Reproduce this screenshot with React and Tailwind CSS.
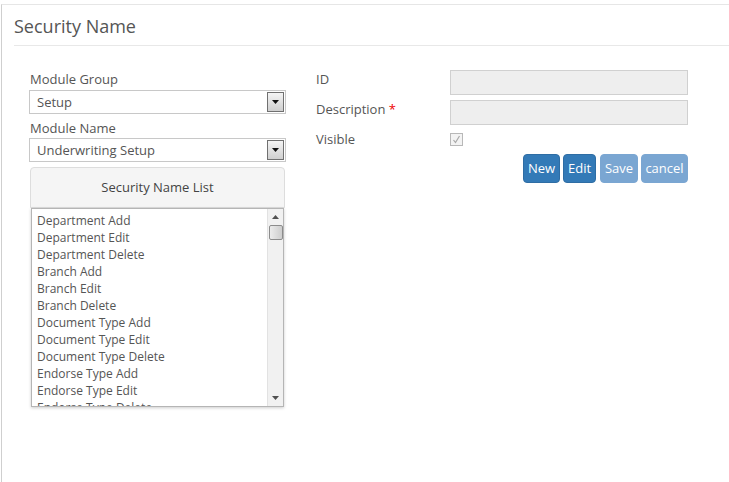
const ITEMS = [
  'Department Add',
  'Department Edit',
  'Department Delete',
  'Branch Add',
  'Branch Edit',
  'Branch Delete',
  'Document Type Add',
  'Document Type Edit',
  'Document Type Delete',
  'Endorse Type Add',
  'Endorse Type Edit',
  'Endorse Type Delete',
];

function SelectBox({ value }) {
  return (
    <div className="h-[24px] w-[257px] border border-[#c8c8c8] bg-white flex items-center justify-between pl-[7px] pr-[1px]">
      <span className="text-[13px] text-[#555] leading-none">{value}</span>
      <span className="w-[17px] h-[20px] border border-[#707070] bg-gradient-to-b from-[#f4f4f4] to-[#cfcfcf] flex items-center justify-center">
        <svg width="7" height="4" viewBox="0 0 7 4"><path d="M0 0h7L3.5 4z" fill="#111" /></svg>
      </span>
    </div>
  );
}

function Btn({ children, disabled, w }) {
  return (
    <button
      className={
        'h-[29px] rounded-[4px] text-[13px] text-white leading-none border ' +
        (disabled ? 'bg-[#7aa6d2] border-[#7aa6d2]' : 'bg-[#337ab7] border-[#2e6da4]') +
        ' ' + w
      }
    >
      {children}
    </button>
  );
}

export default function App() {
  return (
    <div className="w-[729px] h-[482px] bg-white pt-[4px] overflow-hidden" style={{ fontFamily: '"Open Sans", "Liberation Sans", sans-serif' }}>
      <div className="h-[478px] ml-[1px] border-l border-t border-l-[#cfcfcf] border-t-[#e6e6e6]">
        <div className="ml-[12px] pt-[8px] pb-[6px] border-b border-[#e8e8e8]">
          <h1 className="text-[18px] leading-[26px] text-[#555]">Security Name</h1>
        </div>
        <div className="flex pt-[24px] pl-[27px]">
          <div className="w-[257px] flex flex-col">
            <label className="text-[13px] leading-[18px] text-[#555] pl-[1px] mb-[2px]">Module Group</label>
            <SelectBox value="Setup" />
            <label className="text-[13px] leading-[18px] text-[#555] pl-[1px] mt-[5px] mb-[1px]">Module Name</label>
            <SelectBox value="Underwriting Setup" />
            <div className="mt-[5px] ml-[1px] w-[255px]">
              <div className="h-[41px] border border-[#ddd] rounded-t-[4px] bg-[#f5f5f5] flex items-center justify-center text-[13px] text-[#444]">
                Security Name List
              </div>
              <div className="ml-[1px] w-[253px] h-[199px] border border-[#b5b5b5] shadow-[0_1px_3px_rgba(0,0,0,0.2)] flex bg-white">
                <div className="flex-1 overflow-hidden pl-[5px] pt-[3px]">
                  {ITEMS.map((t) => (
                    <div key={t} className="text-[12px] leading-[17px] text-[#555] whitespace-nowrap">{t}</div>
                  ))}
                </div>
                <div className="w-[16px] bg-[#f1f1f1] border-l border-[#e2e2e2] flex flex-col items-center">
                  <div className="h-[16px] flex items-center justify-center">
                    <svg width="7" height="4" viewBox="0 0 7 4"><path d="M3.5 0L7 4H0z" fill="#505050" /></svg>
                  </div>
                  <div className="w-[14px] h-[15px] border border-[#8c8c8c] rounded-[2px] bg-gradient-to-r from-[#ececec] to-[#cdcdcd]" />
                  <div className="flex-1" />
                  <div className="h-[16px] flex items-center justify-center">
                    <svg width="7" height="4" viewBox="0 0 7 4"><path d="M0 0h7L3.5 4z" fill="#505050" /></svg>
                  </div>
                </div>
              </div>
            </div>
          </div>
          <div className="ml-[30px] w-[372px] flex flex-col">
            <div className="flex h-[25px]">
              <span className="w-[134px] text-[13px] leading-[18px] text-[#555]">ID</span>
              <div className="w-[238px] h-[25px] bg-[#eee] border border-[#d0d0d0]" />
            </div>
            <div className="flex h-[25px] mt-[5px]">
              <span className="w-[134px] text-[13px] leading-[18px] text-[#555]">
                Description <span className="text-[#e00]">*</span>
              </span>
              <div className="w-[238px] h-[25px] bg-[#eee] border border-[#d0d0d0]" />
            </div>
            <div className="flex mt-[5px] h-[22px] items-start">
              <span className="w-[134px] text-[13px] leading-[18px] text-[#555]">Visible</span>
              <span className="mt-[3px] w-[13px] h-[13px] border border-[#b8b8b8] bg-[#f3f3f3] flex items-center justify-center">
                <svg width="9" height="9" viewBox="0 0 9 9"><path d="M1.5 5l2 2.5L7.5 1" stroke="#a8a8a8" strokeWidth="1.2" fill="none" /></svg>
              </span>
            </div>
            <div className="flex justify-end gap-[3px] mt-[2px]">
              <Btn w="w-[37px]">New</Btn>
              <Btn w="w-[33px] mr-[1px]">Edit</Btn>
              <Btn disabled w="w-[38px]">Save</Btn>
              <Btn disabled w="w-[47px]">cancel</Btn>
            </div>
          </div>
        </div>
      </div>
    </div>
  );
}
